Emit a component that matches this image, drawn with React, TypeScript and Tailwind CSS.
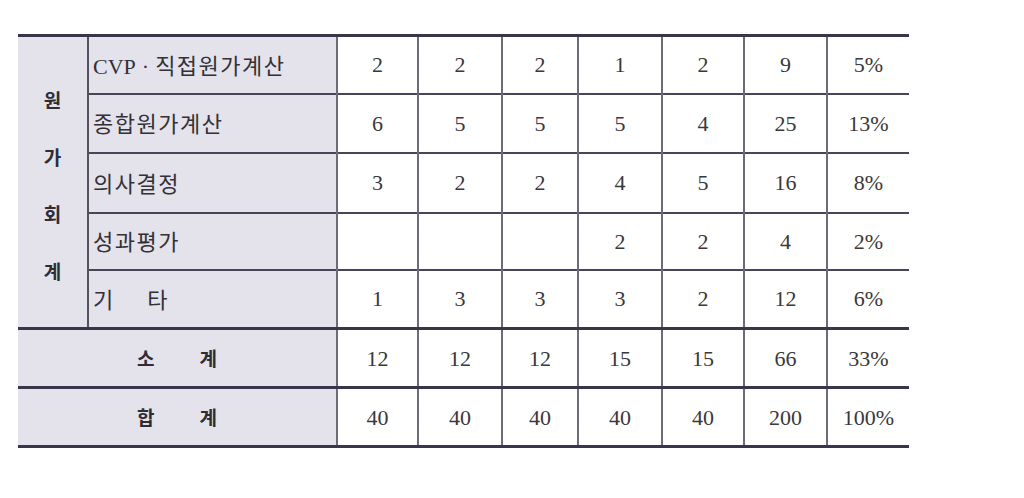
import React from 'react';

const serif = { fontFamily: '"Liberation Serif", "Noto Sans CJK KR", serif' };

const rows: { label: string; values: string[] }[] = [
  { label: '직접원가계산', values: ['2', '2', '2', '1', '2', '9', '5%'] },
  { label: '종합원가계산', values: ['6', '5', '5', '5', '4', '25', '13%'] },
  { label: '의사결정', values: ['3', '2', '2', '4', '5', '16', '8%'] },
  { label: '성과평가', values: ['', '', '', '2', '2', '4', '2%'] },
  { label: '기타', values: ['1', '3', '3', '3', '2', '12', '6%'] },
];

const colWidths = [70, 249, 81, 84, 76, 84, 82, 83, 82];
const rowHeights = ['h-[58px]', 'h-[59px]', 'h-[60px]', 'h-[57px]', 'h-[59px]'];

const NumCell = ({ v }: { v: string }) => (
  <td className="border-l-2 border-l-[#6e6a78] text-center align-middle text-[22px] text-[#3a3838]">
    {v}
  </td>
);

export default function App() {
  return (
    <div className="w-[1024px] h-[498px] bg-white pt-[34px] pl-[18px]" style={serif}>
      <table className="table-fixed border-collapse w-[891px]">
        <colgroup>
          {colWidths.map((w, i) => (
            <col key={i} style={{ width: w }} />
          ))}
        </colgroup>
        <tbody>
          {rows.map((r, i) => (
            <tr
              key={i}
              className={`${rowHeights[i]} ${i === 0 ? 'border-t-[3px] border-t-[#3b354c]' : 'border-t-2 border-t-[#4a4458]'}`}
            >
              {i === 0 && (
                <td
                  rowSpan={5}
                  className="bg-[#e4e2eb] align-middle text-center"
                  style={{ fontFamily: '"Noto Sans CJK KR", sans-serif' }}
                >
                  <div className="flex flex-col items-center gap-[33px] pt-[6px] text-[19px] font-bold text-[#2f2d33] leading-[24px]">
                    <span>원</span>
                    <span>가</span>
                    <span>회</span>
                    <span>계</span>
                  </div>
                </td>
              )}
              <td className="bg-[#e4e2eb] border-l-2 border-l-[#55505e] pl-[4px] pt-[3px] text-[22px] text-[#333136] align-middle whitespace-nowrap">
                {i === 0 && (
                  <>
                    CVP<span className="mx-[6px]">·</span>
                  </>
                )}
                {r.label === '기타' ? (
                  <span>
                    기<span className="inline-block w-[34px]" />타
                  </span>
                ) : (
                  <span className="tracking-[1.5px]">{r.label}</span>
                )}
              </td>
              {r.values.map((v, j) => (
                <NumCell key={j} v={v} />
              ))}
            </tr>
          ))}
          {[
            { a: '소', b: '계', values: ['12', '12', '12', '15', '15', '66', '33%'] },
            { a: '합', b: '계', values: ['40', '40', '40', '40', '40', '200', '100%'] },
          ].map((r, i) => (
            <tr
              key={i}
              className={`h-[59px] ${i === 0 ? 'border-t-[3px] border-t-[#3b354c]' : 'border-t-[3px] border-t-[#3b354c] border-b-[3px] border-b-[#3b354c]'}`}
            >
              <td colSpan={2} className="bg-[#e4e2eb] text-center align-middle">
                <span
                  className="text-[19px] font-bold text-[#2f2d33]"
                  style={{ fontFamily: '"Noto Sans CJK KR", sans-serif' }}
                >
                  {r.a}
                  <span className="inline-block w-[45px]" />
                  {r.b}
                </span>
              </td>
              {r.values.map((v, j) => (
                <NumCell key={j} v={v} />
              ))}
            </tr>
          ))}
        </tbody>
      </table>
    </div>
  );
}
